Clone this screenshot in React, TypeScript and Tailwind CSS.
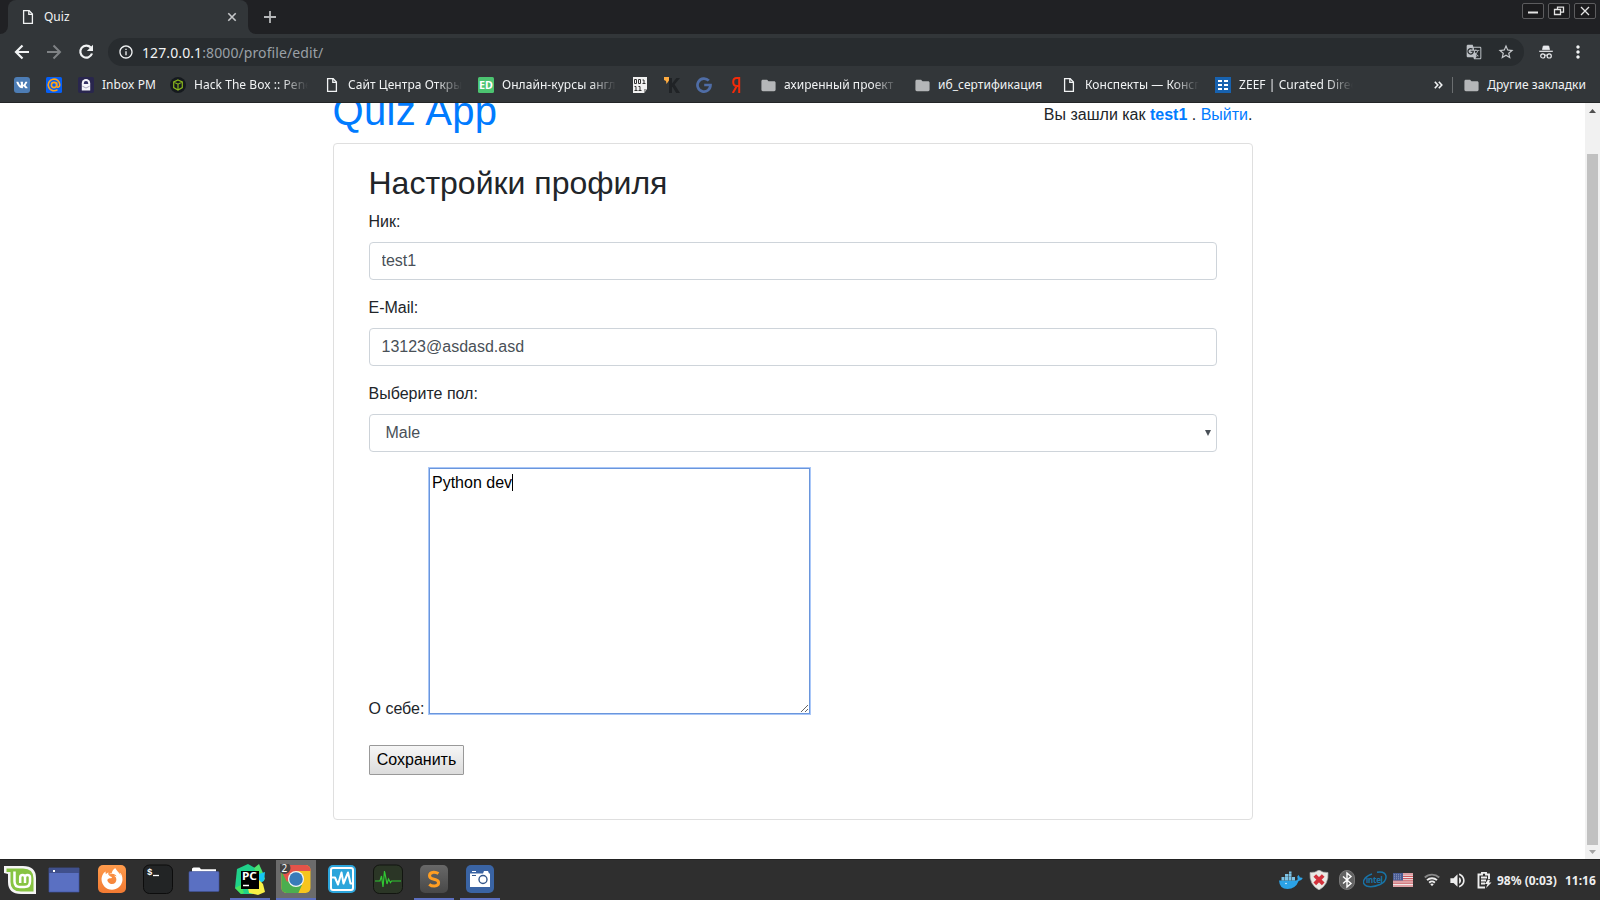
import type { ReactNode } from 'react';
import { MdInfoOutline, MdGTranslate, MdStarBorder, MdMoreVert, MdFolder, MdVolumeUp } from 'react-icons/md';
import { FaVk, FaFirefoxBrowser } from 'react-icons/fa';

function DocIcon() {
  return (
    <svg width="16" height="16" viewBox="0 0 16 16" fill="none" stroke="#f1f3f4" strokeWidth="1.3">
      <path d="M3.6 1.7h5.6l3.2 3.4v9.2H3.6z" />
      <path d="M8.8 1.7v3.7h3.6" />
    </svg>
  );
}

function FolderMark() {
  return <MdFolder className="size-[17px] shrink-0 text-[#b4b6b8]" />;
}

function Bookmark({ icon, label, width, fade }: { icon: ReactNode; label?: string; width: string; fade?: boolean }) {
  return (
    <div className={`flex h-7 shrink-0 items-center ${width}`}>
      <span className="flex size-4 shrink-0 items-center justify-center">{icon}</span>
      {label && (
        <span className={`ml-2 mr-4 flex-1 whitespace-nowrap ${fade ? 'overflow-hidden [mask-image:linear-gradient(to_right,black_calc(100%-26px),transparent)]' : ''}`}>
          {label}
        </span>
      )}
    </div>
  );
}

function WinButton({ width, children }: { width: string; children: ReactNode }) {
  return (
    <div className={`flex h-4 items-center justify-center rounded-[2px] border border-[#5c5c5e] bg-[#1b1b1d] ${width}`}>
      <svg width="12" height="12" viewBox="0 0 12 12" fill="none" stroke="#e4e4e4" strokeWidth="1.3">{children}</svg>
    </div>
  );
}

function TabStrip() {
  return (
    <div className="flex h-[34px] items-start bg-[#202124]">
      <div className="flex h-[34px] w-2 items-end bg-[#323639]">
        <div className="h-[34px] w-2 rounded-br-lg bg-[#202124]" />
      </div>
      <div className="h-[34px] w-60 bg-[#202124]">
        <div className="flex h-full items-center rounded-t-lg bg-[#323639] pl-3 pr-[10px]">
          <DocIcon />
          <span className="ml-2 flex-1 text-[12px] text-[#f1f3f4]">Quiz</span>
          <svg width="12" height="12" viewBox="0 0 12 12" stroke="#c6c8ca" strokeWidth="1.6"><path d="M2.3 2.3l7.4 7.4M9.7 2.3L2.3 9.7" /></svg>
        </div>
      </div>
      <div className="h-[34px] w-2 bg-[#323639]">
        <div className="h-full w-full rounded-bl-lg bg-[#202124]" />
      </div>
      <svg className="ml-2 mt-[11px]" width="12" height="12" viewBox="0 0 12 12" stroke="#b6b8ba" strokeWidth="1.8"><path d="M6 0v12M0 6h12" /></svg>
      <div className="ml-auto mr-1 mt-[3px] flex gap-1">
        <WinButton width="w-[22px]"><path d="M1 7.5h10" strokeWidth="2" /></WinButton>
        <WinButton width="w-[22px]"><path d="M1.5 4.5h6v5h-6zM4.5 4.2v-2h6v5h-2.6" /></WinButton>
        <WinButton width="w-[22px]"><path d="M2 2l8 8M10 2l-8 8" /></WinButton>
      </div>
    </div>
  );
}

function Toolbar() {
  return (
    <div className="flex h-[38px] items-center bg-[#323639] pb-[2px] text-[#f1f3f4]">
      <svg className="ml-3 size-5" viewBox="0 0 20 20" fill="none" stroke="#f1f3f4" strokeWidth="2.2"><path d="M17 10H4.500M10.500 3.500L4 10l6.500 6.500" /></svg>
      <svg className="ml-3 size-5" viewBox="0 0 20 20" fill="none" stroke="#7f8285" strokeWidth="2"><path d="M3 10h12.500M9.500 3.500L16 10l-6.500 6.500" /></svg>
      <svg className="ml-3 size-5" viewBox="0 0 20 20" fill="none" stroke="#f1f3f4" strokeWidth="2.200"><path d="M14.800 5.600A6 6 0 1 0 16 11.500" /><path d="M17 2.800V9h-6.200z" fill="#f1f3f4" stroke="none" /></svg>
      <div className="ml-[12px] flex h-7 w-[1416px] items-center rounded-full bg-[#282c2f] pl-[10px] pr-[9px]">
        <MdInfoOutline className="size-4" />
        <span className="ml-2 flex-1 text-[14px] tracking-[0.1px] text-[#9aa0a6]"><span className="text-[#f1f3f4]">127.0.0.1</span>:8000/profile/edit/</span>
        <MdGTranslate className="mr-[15px] size-4 text-[#bdc1c6]" />
        <MdStarBorder className="size-[18px] text-[#c6c9cc]" />
      </div>
      <svg className="ml-[14px]" width="16" height="16" viewBox="0 0 16 16" fill="none" stroke="#e8eaed">
        <path d="M4.5 5.6L5.3 2h5.4l.8 3.6z" fill="#e8eaed" strokeWidth=".8" />
        <path d="M1.2 7.3h13.6" strokeWidth="1.2" />
        <circle cx="4.8" cy="11.9" r="2.1" strokeWidth="1.2" />
        <circle cx="11.2" cy="11.9" r="2.1" strokeWidth="1.2" />
        <path d="M6.9 11.3q1.1-.6 2.2 0" />
      </svg>
      <MdMoreVert className="ml-[14px] size-5" />
    </div>
  );
}

function BookmarksBar() {
  return (
    <div className="flex h-[31px] items-start border-b border-[#232527] bg-[#323639] pl-[14px] text-[12px] leading-[18px] tracking-[0.05px] text-[#f1f3f4]">
      <div className="-mt-px flex">
        <Bookmark width="w-8" icon={<span className="flex size-4 items-center justify-center rounded-[3px] bg-[#4d7db5]"><FaVk className="size-3 text-white" /></span>} />
        <Bookmark width="w-8" icon={
          <svg width="16" height="16" viewBox="0 0 16 16" fill="none" stroke="#ffa31a" strokeWidth="1.6">
            <rect width="16" height="16" rx="1.5" fill="#055ff7" stroke="none" />
            <circle cx="8" cy="8" r="2.6" />
            <path d="M10.7 5.2v3.6q.1 1.6 1.3 1.5 1.8-.3 1.8-2.3a5.800 5.800 0 1 0-2.300 4.600" />
          </svg>} />
        <Bookmark width="w-[92px]" label="Inbox PM" icon={
          <svg width="16" height="16" viewBox="0 0 16 16">
            <rect width="16" height="16" rx="2" fill="#29264e" />
            <path d="M3.8 6.2a4.2 4.2 0 0 1 8.4 0V13.500H3.800z" fill="#f4f4fa" />
            <path d="M5.800 7V6.200a2.200 2.200 0 0 1 4.400 0V7z" fill="#353267" />
            <path d="M4.400 9.200L8 11l3.600-1.800" stroke="#a5a3bd" fill="none" />
          </svg>} />
        <Bookmark width="w-[154px]" label="Hack The Box :: Pene" fade icon={
          <svg width="16" height="16" viewBox="0 0 16 16" fill="none" stroke="#88b51c" strokeWidth="1.2">
            <circle cx="8" cy="8" r="8" fill="#15191e" stroke="none" />
            <path d="M8 3l4.300 2v5.600L8 13l-4.300-2.400V5zM3.700 5L8 7.200 12.300 5M8 7.200V13" />
          </svg>} />
        <Bookmark width="w-[154px]" label="Сайт Центра Откры" fade icon={<DocIcon />} />
        <Bookmark width="w-[154px]" label="Онлайн-курсы англ" fade icon={
          <svg width="16" height="16" viewBox="0 0 16 16"><rect width="16" height="16" rx="1.500" fill="#4cc471" /><text x="1" y="12" fontSize="10.500" fontWeight="bold" fill="#fff" textLength="14" lengthAdjust="spacingAndGlyphs">ED</text></svg>} />
        <Bookmark width="w-8" icon={
          <svg width="16" height="16" viewBox="0 0 16 16">
            <path d="M1 0h14v12l-3 4H1z" fill="#f1f1f1" />
            <path d="M15 12h-3v4z" fill="#999" />
            <g fill="none" stroke="#333"><path d="M2.500 2.500h2v4h-2zM6.500 2.500h2v4h-2zM10.500 3h1.500v3.500M10.500 6.500h3M2.500 9.500H4v4M2.500 13.500h3M6.500 9.500H8v4M6.500 13.500h3" /></g>
          </svg>} />
        <Bookmark width="w-8" icon={
          <svg width="16" height="16" viewBox="0 0 16 16">
            <path d="M5 1h3v5.500L12.400 1H16l-5.400 6.400L16 16h-3.800L8.400 9.700 8 10.200V16H5z" fill="#202326" />
            <path d="M0 0h5v3.400L2.500 7 2 4 0 3z" fill="#ffac40" />
          </svg>} />
        <Bookmark width="w-8" icon={
          <svg width="16" height="16" viewBox="0 0 16 16" fill="none" stroke="#4f6da6" strokeWidth="2.7"><path d="M12.800 3.700A6.500 6.500 0 1 0 14.500 8H8.200" /></svg>} />
        <Bookmark width="w-8" icon={
          <svg width="16" height="16" viewBox="0 0 16 16" fill="none" stroke="#f12b0a" strokeWidth="2"><path d="M11.200 16V1H8.800Q5.200 1 5.200 5t3.600 4h2.400M8.800 9L4.800 16" /></svg>} />
        <Bookmark width="w-[154px]" label="ахиренный проект" fade icon={<FolderMark />} />
        <Bookmark width="w-[147px]" label="иб_сертификация" icon={<FolderMark />} />
        <Bookmark width="w-[154px]" label="Конспекты — Консп" fade icon={<DocIcon />} />
        <Bookmark width="w-[154px]" label="ZEEF | Curated Direc" fade icon={
          <svg width="16" height="16" viewBox="0 0 16 16"><rect width="16" height="16" fill="#1762b0" /><path d="M3 4h4M9 4h4M3 8h4M9 8h4M3 12h4M9 12h4" stroke="#fff" strokeWidth="2" /></svg>} />
      </div>
      <div className="-mt-px ml-auto flex h-7 items-center pr-[14px]">
        <svg width="9" height="8" viewBox="0 0 9 8" fill="none" stroke="#f1f3f4" strokeWidth="1.6"><path d="M.8.8L3.8 4l-3 3.200M4.800.8L7.800 4l-3 3.200" /></svg>
        <span className="ml-[9px] mr-[10px] h-4 w-px bg-[#6b6e70]" />
        <FolderMark />
        <span className="ml-[7px] whitespace-nowrap">Другие закладки</span>
      </div>
    </div>
  );
}

const field = 'block h-[38px] w-full rounded border border-[#ced4da] bg-white text-[16px] leading-6 text-[#495057] outline-none';

function Page() {
  return (
    <div className="flex h-[756px] bg-white font-['Liberation_Sans',Arial,sans-serif] text-[16px] leading-6 text-[#212529]">
      <main className="flex-1 overflow-hidden pl-[332.5px]">
        <div className="-mt-4 w-[920px]">
          <header className="mb-2 flex h-12 justify-between">
            <h1 className="text-[40px] leading-[48px] tracking-[0.3px] text-[#007bff]">Quiz App</h1>
            <p className="pt-4">Вы зашли как <b className="text-[#007bff]">test1</b> . <span className="text-[#007bff]">Выйти</span>.</p>
          </header>
          <section className="h-[677px] rounded border border-[#dfdfdf] px-[35px] pt-5">
            <h2 className="mb-2 text-[32px] leading-[38.4px]">Настройки профиля</h2>
            <label className="mb-2 block">Ник:</label>
            <input className={`${field} mb-4 px-3`} defaultValue="test1" />
            <label className="mb-2 block">E-Mail:</label>
            <input className={`${field} mb-4 px-3`} defaultValue="13123@asdasd.asd" />
            <label className="mb-2 block">Выберите пол:</label>
            <div className="relative mb-4">
              <select className={`${field} appearance-none px-4`}><option>Male</option></select>
              <svg className="absolute right-[6px] top-[16px]" width="6" height="6" viewBox="0 0 6 6"><path d="M0 0h6L3 6z" fill="#495057" /></svg>
            </div>
            <div className="flex h-[246px] items-end">
              <label className="-mb-[7px] mr-1 w-14 whitespace-nowrap">О себе:</label>
              <div className="relative h-[246px] w-[381px]">
                <textarea className="block h-full w-full border border-[#6a96dc] bg-white p-[2px] pl-[2.5px] text-black shadow-[0_0_0_1px_#a9c7f8] outline-none" defaultValue="Python dev" />
                <span className="absolute left-[83px] top-[6px] h-[17px] w-px bg-black" />
              </div>
            </div>
            <button className="mt-[31px] flex h-[30px] w-[95px] items-center justify-center whitespace-nowrap rounded-[1px] border border-[#999] bg-linear-to-b from-[#f6f6f6] to-[#dcdcdc] pl-px text-black">Сохранить</button>
          </section>
        </div>
      </main>
      <div className="flex w-[15px] flex-col items-center bg-[#f1f1f1]">
        <svg width="15" height="15" viewBox="0 0 15 15"><path d="M4 10h7L7.500 6z" fill="#505050" /></svg>
        <div className="mt-[36px] h-[691px] w-[11px] bg-[#c1c1c1]" />
        <svg className="mt-auto shrink-0" width="15" height="14" viewBox="0 0 15 14"><path d="M4 5h7L7.500 9z" fill="#a3a3a3" /></svg>
      </div>
    </div>
  );
}

function Task({ active, open, children }: { active?: boolean; open?: boolean; children: ReactNode }) {
  return (
    <div className={`flex h-10 w-10 shrink-0 items-start justify-center border-b-2 pt-1 ${active ? 'bg-[#6b6b6b]' : ''} ${open ? 'border-[#5c6fc0]' : 'border-transparent'}`}>
      <svg width="32" height="32" viewBox="0 0 32 32">{children}</svg>
    </div>
  );
}

function Taskbar() {
  return (
    <div className="flex h-[41px] items-start border-t border-[#222] bg-[#2f2f2f]">
      <Task>
        <path d="M0 2h19q13 0 13 12v16H17Q4 30 4 18V10L0 9z" fill="#f5f5f5" />
        <path d="M2.500 4.500H19q10.500 0 10.500 10v13H17Q6.500 27.500 6.500 18V8h-4z" fill="#87c442" />
        <path d="M10.500 7.500v10q0 5.500 5.500 5.500h4.500q5.500 0 5.500-5.500v-4q0-2.500-2.500-2.500T21 13.500V19m0-5.500q0-2.500-2.400-2.500t-2.400 2.500V19" fill="none" stroke="#fff" strokeWidth="2.500" />
      </Task>
      <div className="ml-1" />
      <Task>
        <path d="M1 4h30v24H1z" fill="#5a70c2" stroke="#3f55a4" strokeWidth=".7" />
        <path d="M1 4h30v5H1z" fill="#40508c" /><path d="M5 6h2v2H5z" fill="#fff" />
      </Task>
      <div className="ml-2" />
      <div className="flex gap-[6px]">
        <Task>
          <defs><linearGradient id="fox" x2="0" y2="1"><stop stopColor="#ff9b4c" /><stop offset="1" stopColor="#f27a32" /></linearGradient></defs>
          <rect x="2" y="1" width="28" height="28" rx="5" fill="url(#fox)" />
          <FaFirefoxBrowser x="5" y="4" size={22} color="#fff" />
        </Task>
        <Task>
          <rect x="1.500" y="1" width="29" height="28.500" rx="6" fill="#222425" stroke="#0c0c0c" />
          <text x="5" y="11" fontSize="9" fill="#fff" fontFamily="Liberation Mono" fontWeight="bold">$</text>
          <path d="M11 11.500h6" stroke="#fff" strokeWidth="1.300" />
        </Task>
        <Task>
          <path d="M4 8V4.500l1.500-1h6l1.500 1.700h15V9H4z" fill="#fff" />
          <rect x="1" y="7.500" width="30" height="20" rx="1" fill="#5a70c2" stroke="#40539b" strokeWidth=".6" />
        </Task>
        <Task open>
          <path d="M3 5L14 0l7 4 4 11-6 15H7L1 24z" fill="#20d18a" />
          <path d="M20 4l5-4 4 9 2 6-4 4z" fill="#4be36e" />
          <path d="M25 10l6-2-1 9-5 2z" fill="#16c6f2" />
          <path d="M14 24l11-8 4 4 2 8-7 3-9-2z" fill="#f8f046" />
          <path d="M1 24l6-3 3 8-3 1z" fill="#49e65f" />
          <path d="M7 7h18v18H7z" fill="#000" />
          <text x="8" y="16" fontSize="10.500" fontWeight="bold" fill="#fff" fontFamily="Noto Sans" textLength="15" lengthAdjust="spacingAndGlyphs">PC</text>
          <path d="M9 21.500h6" stroke="#fff" strokeWidth="1.500" />
        </Task>
        <Task active open>
          <clipPath id="chromeTile"><rect x="1.500" y="1" width="29" height="28" rx="5" /></clipPath>
          <g clipPath="url(#chromeTile)">
            <path d="M0 0h32v32H0z" fill="#f7c51e" />
            <path d="M0 3l9 15 13 3-5 11H0z" fill="#4bae4f" />
            <path d="M0 0h32v7H16l-9 11L0 4z" fill="#e55349" />
          </g>
          <circle cx="16" cy="15" r="8" fill="#f5f5f5" /><circle cx="16" cy="15" r="6.800" fill="#397bb9" />
          <circle cx="4.500" cy="4" r="6" fill="#444" />
          <text x="1.500" y="8" fontSize="10" fill="#fff" fontFamily="Noto Sans">2</text>
        </Task>
        <Task>
          <rect x="2" y="1" width="28" height="28" rx="5" fill="#2ca5db" />
          <rect x="5" y="4" width="22" height="22" rx="2" fill="none" stroke="#fff" strokeWidth="2" />
          <path d="M5 13.500h4l3 7 3.500-12 2 11 4.500-11 2.500 11H27" fill="none" stroke="#fff" strokeWidth="2" strokeLinejoin="round" />
        </Task>
        <Task>
          <rect x="1.500" y="1" width="29" height="28.500" rx="6" fill="#2b3626" stroke="#121510" />
          <path d="M3 17h5l1.500-5L11 23l1.500-16L15 20l1.500-5 2 3.500 1-1.500H29" fill="none" stroke="#31c833" strokeWidth="1.200" />
        </Task>
        <Task open>
          <defs><linearGradient id="subl" x2="0" y2="1"><stop stopColor="#686868" /><stop offset="1" stopColor="#484848" /></linearGradient></defs>
          <rect x="2" y="1" width="28" height="28" rx="5" fill="url(#subl)" />
          <path d="M20.500 9.500Q18 8 15.500 8.200q-4 .4-4 3.500 0 2.700 4.500 3.500t4.600 3.400q0 3.200-4 3.500-3 .2-5.400-1.800" fill="none" stroke="#ff9e22" strokeWidth="3" />
        </Task>
        <Task open>
          <rect x="2" y="1" width="28" height="28" rx="5" fill="#3a64a4" />
          <path d="M6 9.500h13L20 7h4l1 2.500h1V23H6z" fill="#fff" /><path d="M8 7.500h4" stroke="#fff" />
          <circle cx="19" cy="15.500" r="4" fill="none" stroke="#34578b" strokeWidth="1.400" /><path d="M8 11.500h4" stroke="#34578b" />
        </Task>
      </div>
      <div className="ml-auto flex h-10 items-center pr-1 text-[12px] font-bold text-[#eee]">
        <svg width="24" height="20" viewBox="0 0 24 20" fill="#2ba2e6">
          <path d="M0 10.500h17q2-.2 1.700-1.700-1.200-2 .6-3.800 1.500 1 1.500 2.600 1.700-.5 3 .5-1 2.600-4.200 2.900Q16.500 19 8.500 19T0 10.500z" />
          <path d="M2.500 7h3v3.500h-3zM6 7h3v3.500H6zM9.500 7h3v3.500h-3zM13 7h3v3.500h-3zM6 4h3v2.700H6zM9.500 4h3v2.700h-3zM10 1.500h2.500v2.200H10z" fill="#7cc3e6" />
          <circle cx="7" cy="13.500" r=".8" fill="#e9f6fd" />
        </svg>
        <svg className="ml-[6px]" width="20" height="20" viewBox="0 0 20 20">
          <path d="M10 0q4 3 9 2.500 1 12-9 17.500Q0 14.500 1 2.500 6 3 10 0z" fill="#e9e9e4" stroke="#aaa" strokeWidth=".7" />
          <path d="M5.800 5.500l8.400 8.400M14.200 5.500l-8.400 8.400" stroke="#d3313b" strokeWidth="3.800" />
        </svg>
        <svg className="ml-[10px]" width="16" height="20" viewBox="0 0 16 20"><rect x=".5" y=".5" width="15" height="19" rx="7.500" fill="#626262" stroke="#777" /><path d="M4 6.500l8 7-4 3.500V3l4 3.500-8 7" fill="none" stroke="#fff" strokeWidth="1.400" /></svg>
        <svg className="ml-2" width="24" height="18" viewBox="0 0 24 18">
          <path d="M14 1.200Q22-.2 23 5.200q.5 5-6 8.300Q9 17 3.500 15-1 12.800 1 9q2-4 8-6" fill="none" stroke="#1874a8" strokeWidth="1.500" />
          <text x="3" y="11.500" fontFamily="Noto Sans" fontWeight="bold" fontSize="8" fill="#1874a8" textLength="17">intel</text>
        </svg>
        <svg className="ml-[6px]" width="20" height="14" viewBox="0 0 20 14">
          <path d="M0 0h20v14H0z" fill="#f1e9e9" />
          <path d="M0 1h20M0 3.300h20M0 5.600h20M0 7.900h20M0 10.200h20M0 13h20" stroke="#cc5960" strokeWidth="1.200" />
          <path d="M0 0h10v7.500H0z" fill="#4a5c94" /><path d="M1 1.800h8M1 3.800h8M1 5.800h8" stroke="#a5acc9" strokeWidth=".8" strokeDasharray="1 1" />
        </svg>
        <svg className="ml-[11px]" width="16" height="14" viewBox="0 0 16 14" fill="none" strokeWidth="1.900">
          <path d="M.8 4.500a10.500 10.500 0 0 1 14.400 0" stroke="#888" /><path d="M3 7.100a7.500 7.500 0 0 1 10 0M5.200 9.700a4 4 0 0 1 5.600 0" stroke="#eee" /><path d="M6.200 11L8 13.300 9.800 11Q8 9.800 6.200 11z" fill="#eee" stroke="none" />
        </svg>
        <MdVolumeUp className="ml-[8px] size-[19px]" />
        <svg className="ml-[10px]" width="15" height="17" viewBox="0 0 15 17" fill="none" stroke="#eee" strokeWidth="1.900">
          <path d="M12 7V2.500H9V.9H5v1.600H1.500v13H8M4 5.500h6M4 8.500h5M4 11.500h4" /><path d="M11 7.500L8 12h2.500L9 16l5.500-5.500H12L13 8z" fill="#eee" stroke="none" />
        </svg>
        <span className="ml-[5px] w-[60px] whitespace-nowrap pt-[2px]">98% (0:03)</span>
        <span className="ml-2 w-[31px] whitespace-nowrap pt-[2px]">11:16</span>
      </div>
    </div>
  );
}

export default function App() {
  return (
    <div className="h-[900px] w-[1600px] overflow-hidden bg-white font-['Noto_Sans',sans-serif]">
      <TabStrip />
      <Toolbar />
      <BookmarksBar />
      <Page />
      <Taskbar />
    </div>
  );
}
